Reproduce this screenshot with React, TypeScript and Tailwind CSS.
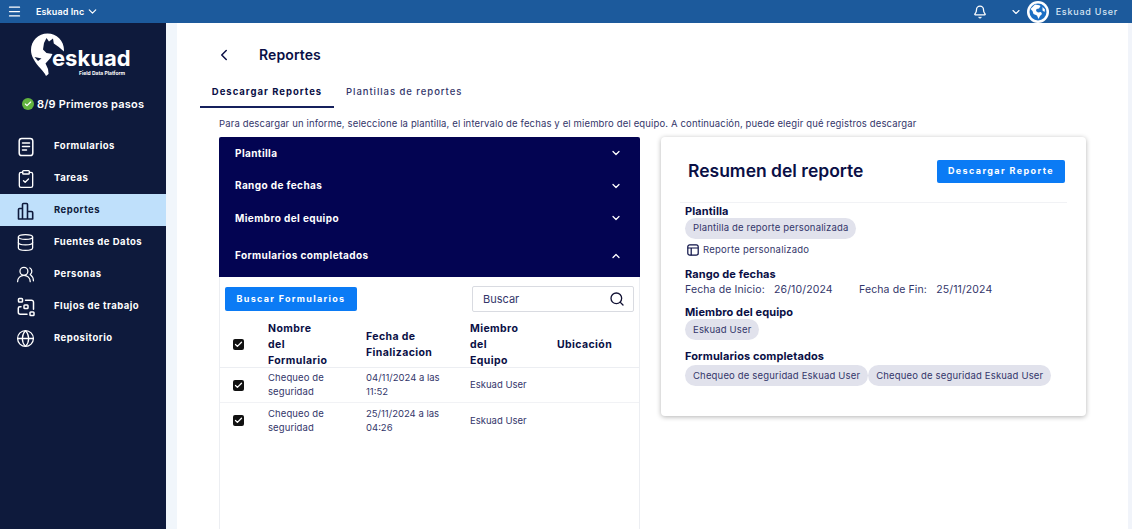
import { Bell, Check, ChevronDown, ChevronLeft, ChevronUp, ClipboardCheck, Database, Globe, Menu, Search, UsersRound } from "lucide-react";
import type { ReactNode } from "react";

function FormIcon() {
  return (
    <svg width="20" height="20" viewBox="0 0 20 20" fill="none" stroke="currentColor" strokeWidth="1.5" strokeLinecap="round">
      <rect x="3.2" y="1.5" width="13.6" height="17" rx="2.6" />
      <path d="M6.5 6h7M6.5 9.5h7M6.5 13h4" />
    </svg>
  );
}

function BarsIcon() {
  return (
    <svg width="20" height="20" viewBox="0 0 20 20" fill="none" stroke="currentColor" strokeWidth="1.6" strokeLinejoin="round">
      <path d="M2.5 18V8.5a1 1 0 0 1 1-1h3V18zM6.5 18V3.5a1 1 0 0 1 1-1h3a1 1 0 0 1 1 1V18zM11.5 18v-7.5h4a1.2 1.2 0 0 1 1.2 1.2V18z" />
    </svg>
  );
}

function FlowIcon() {
  return (
    <svg width="20" height="20" viewBox="0 0 20 20" fill="none" stroke="currentColor" strokeWidth="1.5" strokeLinecap="round" strokeLinejoin="round">
      <rect x="2.5" y="1.5" width="4" height="3.5" rx="0.8" />
      <rect x="8" y="8" width="4" height="3.5" rx="0.8" />
      <rect x="14" y="15" width="4" height="3.5" rx="0.8" />
      <path d="M9.5 3.2h6a2 2 0 0 1 2 2v7M5 9.8H3.8a1.5 1.5 0 0 0-1.5 1.5v4a2 2 0 0 0 2 2H11" />
    </svg>
  );
}

function TableIcon() {
  return (
    <svg width="12" height="12" viewBox="0 0 12 12" fill="none" stroke="#0a0f45" strokeWidth="1.2">
      <rect x="0.8" y="0.8" width="10.4" height="10.4" rx="2" />
      <path d="M0.8 4h10.4M4.2 4v7.2" />
    </svg>
  );
}

function EarthIcon() {
  return (
    <svg width="22" height="22" viewBox="0 0 22 22">
      <circle cx="11" cy="11" r="11" fill="#ffffff" />
      <circle cx="11" cy="11" r="8.5" fill="#1c6fc4" />
      <path d="M8 3.5c2 .5 4 .3 5.500 1.500l-1.500 2.500-2.500.5-.5 2 2 1.500 3-.5 1 2-2 2-1.500 3-1.500-3.500-3.500-1.500-1-3L3.500 8z" fill="#ffffff" />
      <path d="M15.500 6l2.500 2.500-.5 2.500-2-1.500z" fill="#ffffff" />
    </svg>
  );
}

function Logo() {
  return (
    <div className="relative h-[46px] w-[100px]">
      <svg className="absolute left-0 top-0" width="35" height="44" viewBox="0 0 35 44">
        <path d="M16.500 0.500C25.600 0.500 33 7.900 33 17c0 9-8 19-18 26-2-5-9-10-12.500-17C0.800 23 0 20 0 17 0 7.900 7.400 0.500 16.500 0.500z" fill="#ffffff" />
        <path d="M13 10l2.500-5 2.500 3.500 4-3 .8 5 5 3.500 5.700 5V44H18l-1-8-2.500-5.500 5-5.500 2-4-6-1-3.500-3.500z" fill="#0e1a3c" />
        <path d="M3.500 24l7 1.500-3.500 2.500z" fill="#0e1a3c" />
      </svg>
      <span className="absolute left-[21px] top-[14px] text-[22px] font-bold leading-none text-white">eskuad</span>
      <span className="absolute left-[48px] top-[38px] whitespace-nowrap text-[5px] font-bold leading-none text-white">Field Data Platform</span>
    </div>
  );
}

function NavItem({ icon, label, active }: { icon: ReactNode; label: string; active?: boolean }) {
  return (
    <div className={`flex h-8 items-center pl-[16px] pt-[2px] ${active ? "bg-[#bfe0fb] text-[#0e1a3c]" : "text-white"}`}>
      <span className="flex w-[38px] shrink-0 items-center">{icon}</span>
      <span className="text-[9.5px] font-bold tracking-[0.5px]">{label}</span>
    </div>
  );
}

function AccordionRow({ label, height, open }: { label: string; height: string; open?: boolean }) {
  return (
    <div className={`flex items-center justify-between pl-4 pr-[18px] ${height}`}>
      <span className="text-[10px] font-bold tracking-[0.4px] text-white">{label}</span>
      {open ? <ChevronUp size={12} strokeWidth={2.5} color="#ffffff" /> : <ChevronDown size={12} strokeWidth={2.5} color="#ffffff" />}
    </div>
  );
}

function Tick() {
  return (
    <span className="flex h-[11px] w-[11px] items-center justify-center rounded-[2px] bg-[#111111]">
      <Check size={9} strokeWidth={3.5} color="#ffffff" />
    </span>
  );
}

function Chip({ children }: { children: ReactNode }) {
  return <span className="flex h-[21px] items-center whitespace-nowrap rounded-full bg-[#e1e2ec] px-2 text-[9.5px] tracking-[0.17px] text-[#33366a]">{children}</span>;
}

function Label({ children }: { children: ReactNode }) {
  return <div className="text-[11px] font-bold leading-[14px] tracking-[0.1px] text-[#0a0f45]">{children}</div>;
}

const ROWS = [
  ["04/11/2024 a las", "11:52"],
  ["25/11/2024 a las", "04:26"],
];

export default function App() {
  return (
    <div className="flex h-[529px] w-[1132px] flex-col overflow-hidden bg-white font-['Inter','Liberation_Sans',sans-serif]">
      <header className="flex h-[23px] shrink-0 items-center bg-[#1c5a9c] text-white">
        <Menu size={15} className="ml-[7px]" />
        <span className="ml-[14px] text-[9px] font-semibold tracking-[0.1px]">Eskuad Inc</span>
        <ChevronDown size={13} strokeWidth={2.2} className="ml-[2px]" />
        <Bell size={14} strokeWidth={2.2} className="ml-auto" />
        <ChevronDown size={12} strokeWidth={2.2} className="ml-[23px]" />
        <span className="ml-[5px]"><EarthIcon /></span>
        <span className="ml-[7px] mr-[14px] text-[9px] font-medium tracking-[0.75px] text-[#d6e4f3]">Eskuad User</span>
      </header>

      <div className="flex min-h-0 flex-1">
        <aside className="flex w-[166px] shrink-0 flex-col bg-[#0e1a3c]">
          <div className="ml-[31px] mt-[10px]">
            <Logo />
          </div>
          <div className="ml-[22px] mt-[17px] flex items-center gap-[3px]">
            <span className="flex h-[12px] w-[12px] items-center justify-center rounded-full bg-[#62b33f]">
              <Check size={8} strokeWidth={3.5} color="#ffffff" />
            </span>
            <span className="text-[11px] font-semibold tracking-[0.2px] text-white">8/9 Primeros pasos</span>
          </div>
          <nav className="mt-[17px] flex flex-col">
            <NavItem icon={<FormIcon />} label="Formularios" />
            <NavItem icon={<ClipboardCheck size={20} strokeWidth={1.6} />} label="Tareas" />
            <NavItem icon={<BarsIcon />} label="Reportes" active />
            <NavItem icon={<Database size={19} strokeWidth={1.6} />} label="Fuentes de Datos" />
            <NavItem icon={<UsersRound size={19} strokeWidth={1.6} />} label="Personas" />
            <NavItem icon={<FlowIcon />} label="Flujos de trabajo" />
            <NavItem icon={<Globe size={19} strokeWidth={1.6} />} label="Repositorio" />
          </nav>
        </aside>
        <div className="w-[11px] shrink-0 bg-[#f1f6fb]" />

        <main className="flex min-w-0 flex-1 flex-col">
          <div className="ml-[38px] mt-[21px] flex items-center">
            <ChevronLeft size={18} strokeWidth={2} color="#0a0f45" />
            <h1 className="ml-[26px] text-[14px] font-semibold tracking-[0.1px] text-[#0a0f45]">Reportes</h1>
          </div>

          <div className="ml-[23px] mt-[20px] flex items-end">
            <div className="flex h-[23px] w-[134px] items-start justify-center border-b-2 border-[#15205c] text-[9.5px] font-bold tracking-[1px] text-[#0a0f45]">Descargar Reportes</div>
            <div className="ml-[12px] h-[23px] text-[9.5px] font-medium tracking-[0.95px] text-[#33366a]">Plantillas de reportes</div>
          </div>

          <p className="ml-[42px] mt-[10px] whitespace-nowrap text-[9.5px] leading-[12px] tracking-[0.14px] text-[#33366a]">
            Para descargar un informe, seleccione la plantilla, el intervalo de fechas y el miembro del equipo. A continuación, puede elegir qué registros descargar
          </p>

          <div className="ml-[42px] mt-[7px] flex min-h-0 flex-1 items-start gap-[21px]">
            <section className="flex h-full w-[421px] shrink-0 flex-col border-x border-[#eceef2]">
              <div className="-mx-px rounded-t-[2px] bg-[#030452]">
                <AccordionRow label="Plantilla" height="h-[32px]" />
                <AccordionRow label="Rango de fechas" height="h-[33px]" />
                <AccordionRow label="Miembro del equipo" height="h-[32px]" />
                <AccordionRow label="Formularios completados" height="h-[43px]" open />
              </div>

              <div className="mt-[9px] flex items-center justify-between pl-[5px] pr-[5px]">
                <button className="flex h-[24px] w-[132px] items-center justify-center rounded-[2px] bg-[#0b7bf5] text-[9px] font-bold tracking-[1.3px] text-white">Buscar Formularios</button>
                <div className="flex h-[26px] w-[162px] items-center justify-between rounded-[2px] border border-[#d9dbe1] pl-[10px] pr-[8px] text-[11px] text-[#33366a]">
                  Buscar
                  <Search size={16} color="#111133" />
                </div>
              </div>

              <div className="mt-[8px] flex h-[48px] items-center border-b border-[#eceef2] pt-[2px] text-[10.5px] font-bold leading-[16px] tracking-[0.4px] text-[#0a0f45]">
                <span className="ml-[13px] w-[35px]"><Tick /></span>
                <span className="w-[98px]">Nombre<br />del<br />Formulario</span>
                <span className="w-[104px]">Fecha de<br />Finalizacion</span>
                <span className="w-[87px]">Miembro<br />del<br />Equipo</span>
                <span>Ubicación</span>
              </div>
              {ROWS.map(([date, time], i) => (
                <div key={time} className={`flex h-[35px] items-center text-[9.5px] leading-[14px] text-[#33366a] ${i === 0 ? "border-b border-[#f1f2f5]" : ""}`}>
                  <span className="ml-[13px] w-[35px]"><Tick /></span>
                  <span className="w-[98px] tracking-[0.1px]">Chequeo de<br />seguridad</span>
                  <span className="w-[104px]">{date}<br />{time}</span>
                  <span>Eskuad User</span>
                </div>
              ))}
            </section>

            <section className="h-[279px] w-[425px] shrink-0 rounded-[4px] bg-white px-[24px] shadow-[0_1px_5px_rgba(0,0,0,0.3)]">
              <div className="-mx-[5px] flex h-[66px] items-center justify-between border-b border-[#f1f2f5] pl-[8px] pr-[2px] pt-[3px]">
                <h2 className="pt-[1px] text-[17.5px] font-semibold text-[#0a0f45]">Resumen del reporte</h2>
                <button className="flex h-[23px] w-[128px] items-center justify-center rounded-[2px] bg-[#0b7bf5] text-[9px] font-bold tracking-[1.4px] text-white">Descargar Reporte</button>
              </div>
              <div className="mt-[1px]">
                <Label>Plantilla</Label>
                <div className="flex"><Chip>Plantilla de reporte personalizada</Chip></div>
                <div className="mt-[4px] flex items-center gap-[4px] text-[9.5px] tracking-[0.24px] text-[#33366a]"><span className="ml-[2px]"><TableIcon /></span>Reporte personalizado</div>
                <div className="mt-[10px]"><Label>Rango de fechas</Label></div>
                <div className="mt-[1px] flex text-[10.5px] leading-[15px] tracking-[0.12px] text-[#33366a]">
                  <span className="w-[174px]">Fecha de Inicio:&nbsp;&nbsp; 26/10/2024</span>
                  <span>Fecha de Fin:&nbsp;&nbsp; 25/11/2024</span>
                </div>
                <div className="mt-[8px]"><Label>Miembro del equipo</Label></div>
                <div className="flex"><Chip>Eskuad User</Chip></div>
                <div className="mt-[9px]"><Label>Formularios completados</Label></div>
                <div className="mt-[2px] flex">
                  <Chip>Chequeo de seguridad Eskuad User</Chip>
                  <Chip>Chequeo de seguridad Eskuad User</Chip>
                </div>
              </div>
            </section>
          </div>
        </main>
        <div className="w-[4px] shrink-0 bg-[#f1f4fa]" />
      </div>
    </div>
  );
}
